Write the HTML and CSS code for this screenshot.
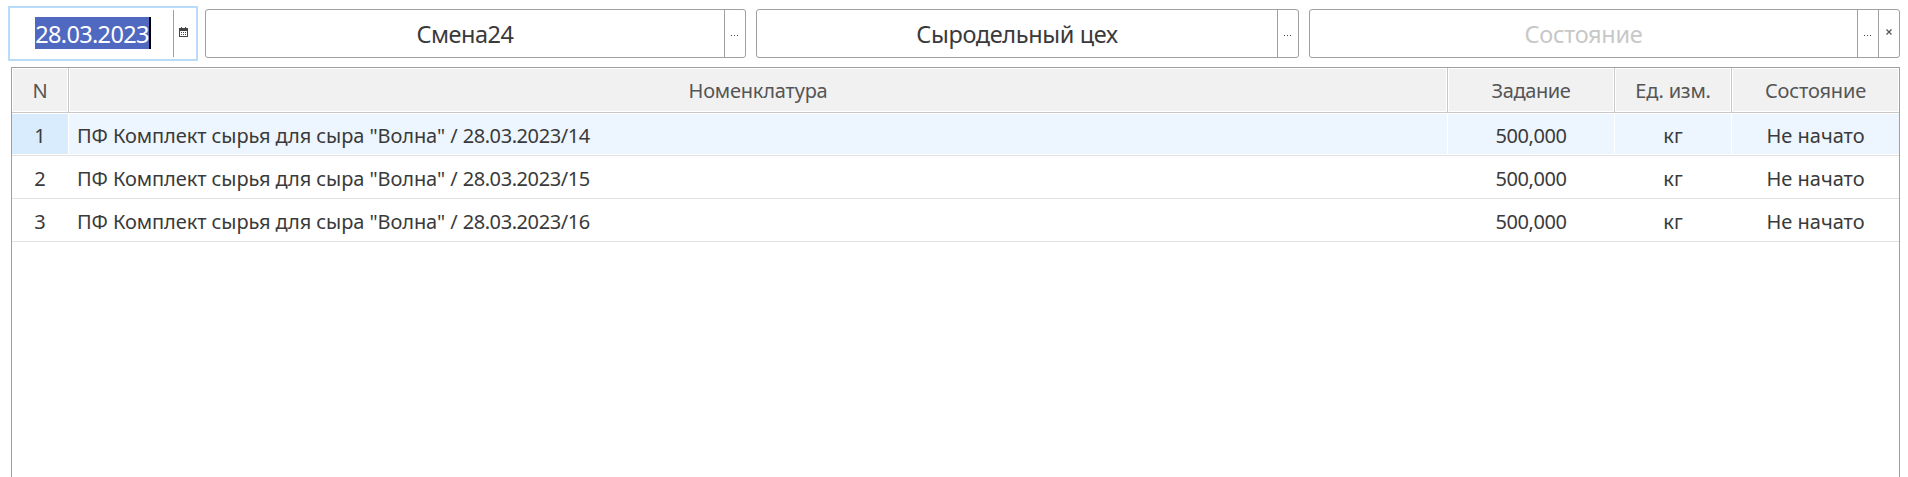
FILE: index.html
```html
<!DOCTYPE html>
<html lang="ru">
<head>
<meta charset="utf-8">
<title>Задания</title>
<link rel="stylesheet" href="styles.css">
</head>
<body>
<div class="filters">
  <div class="field field-date">
    <div class="value"><span class="selected">28.03.2023</span></div>
    <div class="button button-date">
      <svg class="calendar" width="9" height="10" viewBox="0 0 9 10" shape-rendering="crispEdges">
        <path fill="#444" fill-rule="evenodd" d="M2 0h1v1h3V0h1v1h2v9H0V1h2zM1 4v5h7V4z"/>
        <path fill="#444" d="M2 5h1v1H2zM4 5h1v1H4zM6 5h1v1H6zM2 7h1v1H2zM4 7h1v1H4zM6 7h1v1H6z"/>
      </svg>
    </div>
  </div>
  <div class="field field-shift">
    <div class="value"><span class="t-shift">Смена24</span></div>
    <div class="button"><svg width="7" height="1" viewBox="0 0 7 1"><path fill="#444" d="M0 0h1v1H0zM3 0h1v1H3zM6 0h1v1H6z"/></svg></div>
  </div>
  <div class="field field-shop">
    <div class="value"><span class="t-shop">Сыродельный цех</span></div>
    <div class="button"><svg width="7" height="1" viewBox="0 0 7 1"><path fill="#444" d="M0 0h1v1H0zM3 0h1v1H3zM6 0h1v1H6z"/></svg></div>
  </div>
  <div class="field field-state">
    <div class="value"><span class="placeholder">Состояние</span></div>
    <div class="button"><svg width="7" height="1" viewBox="0 0 7 1"><path fill="#444" d="M0 0h1v1H0zM3 0h1v1H3zM6 0h1v1H6z"/></svg></div>
    <div class="button button-clear"><svg width="6" height="6" viewBox="0 0 6 6"><path d="M.5.5l5 5M5.5.5l-5 5" stroke="#555" stroke-width="1.2"/></svg></div>
  </div>
</div>
<div class="table">
  <div class="row head">
    <div class="cell"><span>N</span></div>
    <div class="cell"><span class="h-name">Номенклатура</span></div>
    <div class="cell"><span class="h-task">Задание</span></div>
    <div class="cell"><span class="h-unit">Ед. изм.</span></div>
    <div class="cell"><span class="h-state">Состояние</span></div>
  </div>
  <div class="row current">
    <div class="cell number"><span>1</span></div>
    <div class="cell name"><span>ПФ Комплект сырья для сыра "Волна" / <span class="digits">28.03.2023/14</span></span></div>
    <div class="cell task"><span class="digits">500,000</span></div>
    <div class="cell unit"><span>кг</span></div>
    <div class="cell state"><span>Не начато</span></div>
  </div>
  <div class="row">
    <div class="cell number"><span>2</span></div>
    <div class="cell name"><span>ПФ Комплект сырья для сыра "Волна" / <span class="digits">28.03.2023/15</span></span></div>
    <div class="cell task"><span class="digits">500,000</span></div>
    <div class="cell unit"><span>кг</span></div>
    <div class="cell state"><span>Не начато</span></div>
  </div>
  <div class="row">
    <div class="cell number"><span>3</span></div>
    <div class="cell name"><span>ПФ Комплект сырья для сыра "Волна" / <span class="digits">28.03.2023/16</span></span></div>
    <div class="cell task"><span class="digits">500,000</span></div>
    <div class="cell unit"><span>кг</span></div>
    <div class="cell state"><span>Не начато</span></div>
  </div>
</div>
</body>
</html>
```

FILE: styles.css
```css
* { box-sizing: border-box; }
body {
  margin: 0;
  height: 477px;
  overflow: hidden;
  display: flex;
  flex-direction: column;
  background: #fff;
  color: #3a3a3a;
  font-family: "Noto Sans", sans-serif;
  font-size: 20px;
}
.filters {
  display: flex;
  align-items: center;
  height: 67px;
  padding: 0 8px 1px;
  flex: none;
}
.field {
  display: flex;
  height: 49px;
  border: 1px solid #a0a0a0;
  border-radius: 3px;
  font-size: 23.5px;
}
.field-date {
  width: 190px;
  height: 55px;
  border: 2px solid #b8dcfa;
  border-radius: 0;
  padding: 2px 1px;
  margin-right: 7px;
}
.field-shift { width: 541px; margin-right: 10px; }
.field-shop { width: 543px; margin-right: 10px; }
.field-state { width: 591px; }
.value {
  flex: 1;
  display: flex;
  align-items: center;
  justify-content: center;
  white-space: nowrap;
  padding-top: 2px;
}
.button {
  width: 21px;
  border-left: 1px solid #a0a0a0;
  display: flex;
  align-items: center;
  justify-content: center;
  padding: 5px 1px 0 0;
}
.field-date .value { padding: 0 0 0 2px; }
.button-date { width: 22px; padding: 0 2px 3px 0; }
.button-clear { padding: 0 0 2px; }
.selected {
  background: #5069c0;
  color: #fff;
  height: 32px;
  line-height: 34px;
  border-right: 2px solid #000;
  letter-spacing: -0.66px;
}
.t-shift { letter-spacing: -0.5px; }
.t-shop { letter-spacing: -0.35px; }
.placeholder { color: #c8c8c8; letter-spacing: -0.3px; }
.table {
  flex: 1;
  margin: 0 8px 0 11px;
  border: 1px solid #a0a0a0;
  border-bottom: 0;
}
.row {
  display: grid;
  grid-template-columns: 57px 1379px 167px 117px 1fr;
  height: 43px;
  border-bottom: 1px solid #e2e2e2;
}
.cell {
  display: flex;
  align-items: center;
  justify-content: center;
  white-space: nowrap;
  border: solid #fff;
  border-width: 1px 1px 1px 0;
  padding-top: 2px;
}
.cell:last-child { border-right: 0; }
.current .cell { background: #edf6ff; }
.current .number { background: #d9ecfd; }
.name {
  justify-content: flex-start;
  padding-left: 8px;
  letter-spacing: -0.08px;
}
.digits { letter-spacing: -0.42px; }
.head {
  height: 45px;
  border-bottom-color: #c8c8c8;
  color: #555;
}
.head .cell {
  background: #f1f1f1;
  border-width: 1px;
  box-shadow: 1px 0 0 #c8c8c8;
  margin-right: 1px;
  padding-top: 0;
}
.head .cell:last-child { margin-right: 0; box-shadow: none; border-right: 1px solid #fff; }
.h-name { letter-spacing: -0.2px; }
.h-task { letter-spacing: -0.4px; }
.h-unit { letter-spacing: -0.2px; }
.h-state { letter-spacing: -0.15px; }
```
